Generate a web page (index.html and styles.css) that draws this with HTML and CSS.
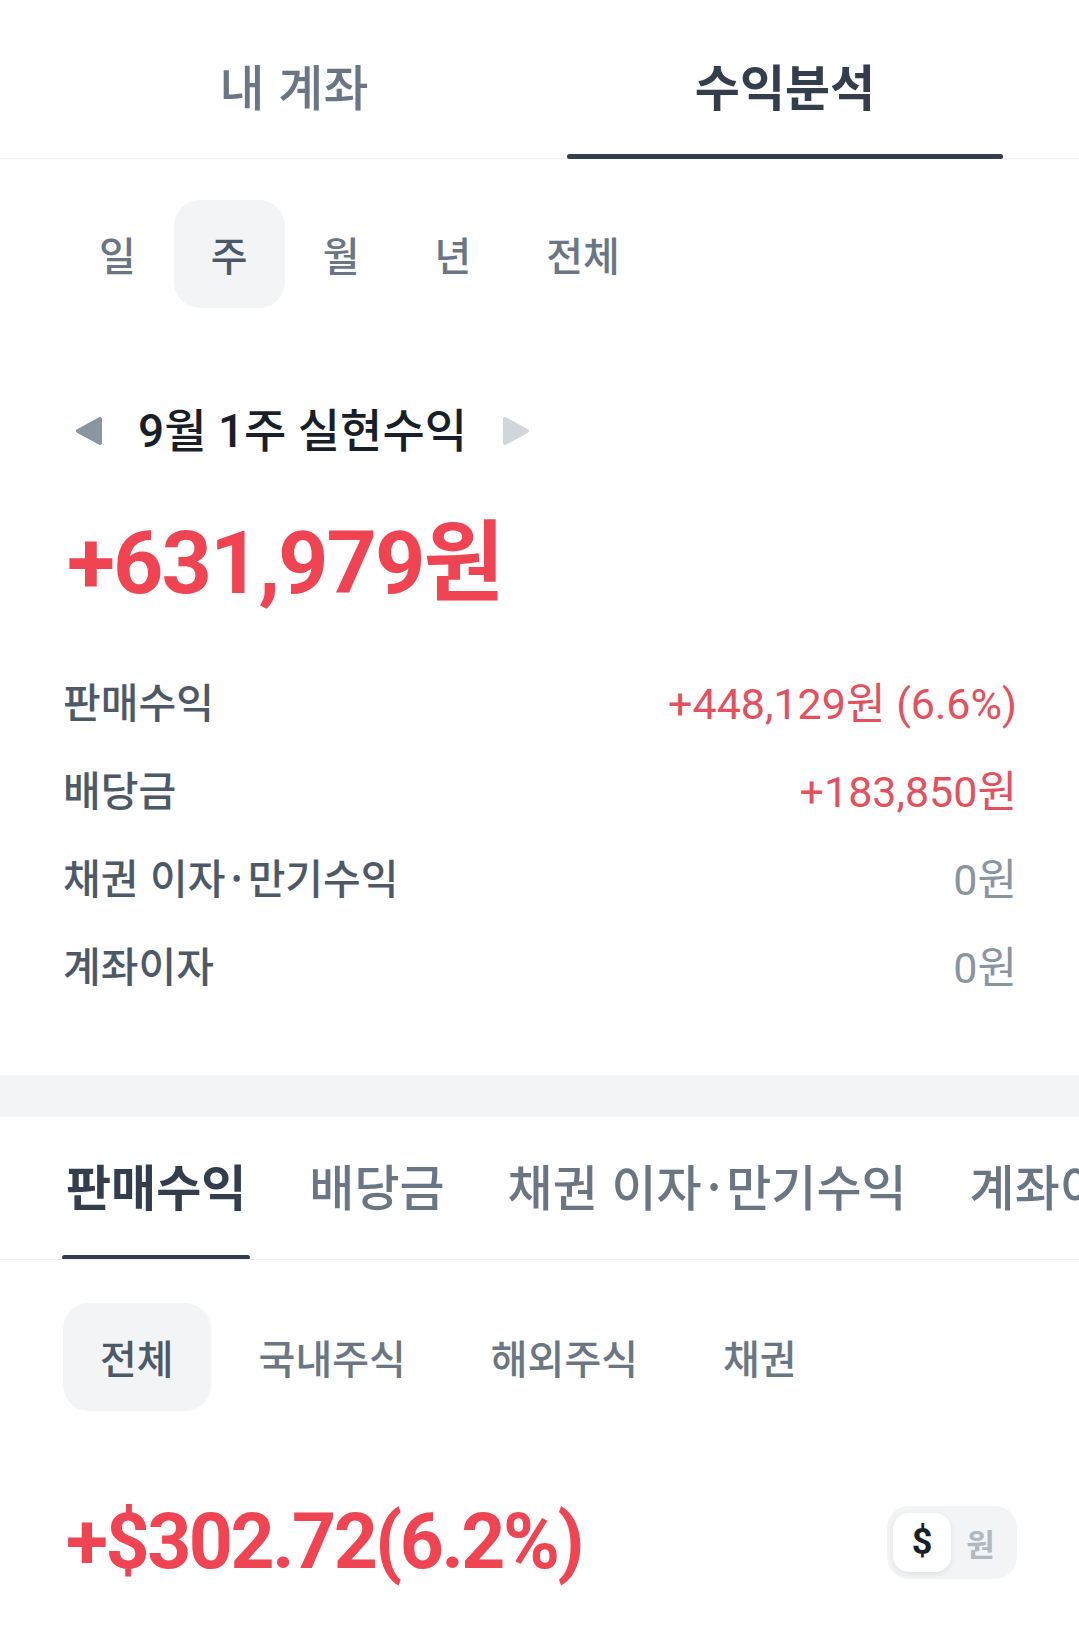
FILE: index.html
```html
<!DOCTYPE html>
<html lang="ko">
<head>
    <meta charset="UTF-8">
    <meta name="viewport" content="width=device-width, initial-scale=1.0">
    <title>수익분석</title>
    <link rel="stylesheet" href="styles.css">
</head>
<body>
    <div class="screen">
        <nav class="main-tabs">
            <a class="main-tab">내 계좌</a>
            <a class="main-tab active">수익분석</a>
        </nav>

        <section class="summary">
            <div class="period-picker">
                <button class="chip">일</button>
                <button class="chip selected">주</button>
                <button class="chip">월</button>
                <button class="chip">년</button>
                <button class="chip">전체</button>
            </div>

            <div class="week-nav">
                <svg class="tri" width="28" height="30" viewBox="0 0 28 30">
                    <path d="M25 3 L25 27 L3 15 Z" fill="#8b95a1" stroke="#8b95a1" stroke-width="4" stroke-linejoin="round"/>
                </svg>
                <h2 class="week-title">9월 1주 실현수익</h2>
                <svg class="tri" width="28" height="30" viewBox="0 0 28 30">
                    <path d="M3 3 L3 27 L25 15 Z" fill="#d1d6db" stroke="#d1d6db" stroke-width="4" stroke-linejoin="round"/>
                </svg>
            </div>

            <div class="total">+631,979원</div>

            <div class="breakdown">
                <div class="row">
                    <span class="label">판매수익</span>
                    <span class="value plus">+448,129원 (6.6%)</span>
                </div>
                <div class="row">
                    <span class="label">배당금</span>
                    <span class="value plus">+183,850원</span>
                </div>
                <div class="row">
                    <span class="label">채권 이자<span class="dot">·</span>만기수익</span>
                    <span class="value">0원</span>
                </div>
                <div class="row">
                    <span class="label">계좌이자</span>
                    <span class="value">0원</span>
                </div>
            </div>
        </section>

        <div class="band"></div>

        <nav class="sub-tabs">
            <a class="sub-tab active">판매수익</a>
            <a class="sub-tab">배당금</a>
            <a class="sub-tab">채권 이자<span class="dot">·</span>만기수익</a>
            <a class="sub-tab">계좌이자</a>
        </nav>

        <div class="filter-chips">
            <button class="chip selected">전체</button>
            <button class="chip">국내주식</button>
            <button class="chip">해외주식</button>
            <button class="chip">채권</button>
        </div>

        <div class="result-row">
            <div class="result">+$302.72(6.2%)</div>
            <div class="unit-toggle">
                <span class="unit on">$</span>
                <span class="unit">원</span>
            </div>
        </div>
    </div>
</body>
</html>
```

FILE: styles.css
```css
body {
    margin: 0;
    background: #fff;
    font-family: Roboto, "Noto Sans CJK KR", sans-serif;
    color: #191f28;
}
.screen {
    width: 1079px;
    height: 1627px;
    overflow: hidden;
}
.dot {
    padding: 0 5px;
}

/* top tabs */
.main-tabs {
    display: flex;
    gap: 55px;
    padding: 0 76px;
    border-bottom: 1px solid #eceef0;
}
.main-tab {
    flex: 1;
    position: relative;
    text-align: center;
    padding: 54px 0 42px;
    font-family: "Noto Sans CJK KR", sans-serif;
    font-size: 49px;
    line-height: 62px;
    font-weight: 500;
    color: #6b7684;
}
.main-tab.active {
    color: #333d4b;
    font-weight: 700;
}
.main-tab.active::after {
    content: "";
    position: absolute;
    left: 0;
    right: 0;
    bottom: -1px;
    height: 5px;
    border-radius: 3px;
    background: #333d4b;
}

/* chips */
.chip {
    border: none;
    background: none;
    padding: 0 37px;
    height: 108px;
    border-radius: 26px;
    font-family: "Noto Sans CJK KR", sans-serif;
    font-size: 40px;
    font-weight: 500;
    color: #6b7684;
}
.chip.selected {
    background: #f2f4f6;
    color: #4e5968;
}
.period-picker {
    display: flex;
    gap: 1px;
    padding: 41px 0 0 62px;
}

/* summary */
.summary {
    padding-bottom: 67px;
}
.week-nav {
    display: flex;
    align-items: center;
    gap: 35px;
    margin: 93px 0 0 75px;
}
.week-title {
    margin: 0;
    font-size: 46px;
    line-height: 60px;
    font-weight: 500;
    color: #191f28;
}
.total {
    margin: 52px 0 0 67px;
    font-size: 88px;
    line-height: 100px;
    font-weight: 700;
    letter-spacing: -2px;
    color: #f04452;
}
.breakdown {
    margin: 43px 62px 0 63px;
}
.row {
    display: flex;
    justify-content: space-between;
    align-items: center;
    height: 88px;
}
.label {
    font-family: "Noto Sans CJK KR", sans-serif;
    font-size: 41px;
    font-weight: 500;
    color: #4e5968;
}
.value {
    font-size: 43px;
    color: #8b95a1;
}
.value.plus {
    color: #e5505e;
}

.band {
    height: 42px;
    background: #f2f4f6;
}

/* second tabs */
.sub-tabs {
    display: flex;
    gap: 55px;
    padding-left: 62px;
    white-space: nowrap;
    overflow: hidden;
    border-bottom: 1px solid #eceef0;
}
.sub-tab {
    position: relative;
    flex: none;
    padding: 37px 4px 43px;
    font-family: "Noto Sans CJK KR", sans-serif;
    font-size: 49px;
    line-height: 62px;
    font-weight: 500;
    color: #6b7684;
}
.sub-tab.active {
    color: #333d4b;
    font-weight: 700;
}
.sub-tab.active::after {
    content: "";
    position: absolute;
    left: 0;
    right: 0;
    bottom: -1px;
    height: 5px;
    border-radius: 3px;
    background: #333d4b;
}

.filter-chips {
    display: flex;
    gap: 11px;
    padding: 43px 0 0 63px;
}

/* bottom amount */
.result-row {
    display: flex;
    justify-content: space-between;
    align-items: center;
    margin: 86px 62px 0 66px;
}
.result {
    font-size: 77px;
    line-height: 90px;
    font-weight: 700;
    letter-spacing: -2.5px;
    color: #f04452;
}
.unit-toggle {
    display: flex;
    align-items: center;
    height: 73px;
    width: 130px;
    box-sizing: border-box;
    padding: 0 7px 0 6px;
    border-radius: 22px;
    background: #f2f4f6;
}
.unit {
    flex: 1;
    text-align: center;
    font-family: "Noto Sans CJK KR", sans-serif;
    font-size: 31px;
    font-weight: 700;
    color: #b0b8c1;
}
.unit.on {
    flex: none;
    width: 58px;
    height: 59px;
    line-height: 59px;
    border-radius: 16px;
    background: #fff;
    box-shadow: 0 2px 6px rgba(0,0,0,0.08);
    font-family: Roboto, sans-serif;
    font-size: 36px;
    color: #191f28;
}
```
